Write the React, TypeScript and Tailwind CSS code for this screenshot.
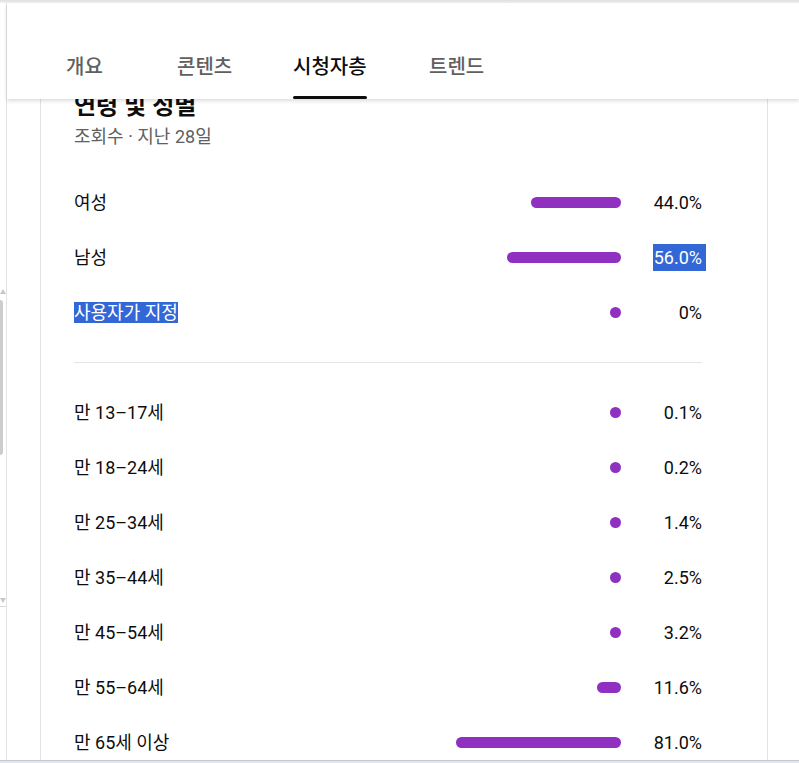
import React from 'react';

interface Row {
  label: string;
  pct: number;
  text: string;
  selLabel?: boolean;
  selValue?: boolean;
}

const genderRows: Row[] = [
  { label: '여성', pct: 44.0, text: '44.0%' },
  { label: '남성', pct: 56.0, text: '56.0%', selValue: true },
  { label: '사용자가 지정', pct: 0, text: '0%', selLabel: true },
];

const ageRows: Row[] = [
  { label: '만 13–17세', pct: 0.1, text: '0.1%' },
  { label: '만 18–24세', pct: 0.2, text: '0.2%' },
  { label: '만 25–34세', pct: 1.4, text: '1.4%' },
  { label: '만 35–44세', pct: 2.5, text: '2.5%' },
  { label: '만 45–54세', pct: 3.2, text: '3.2%' },
  { label: '만 55–64세', pct: 11.6, text: '11.6%' },
  { label: '만 65세 이상', pct: 81.0, text: '81.0%' },
];

const tabs = [
  { name: '개요', w: 'w-[111px]' },
  { name: '콘텐츠', w: 'w-[116px]' },
  { name: '시청자층', w: 'w-[136px]' },
  { name: '트렌드', w: 'w-[100px]' },
];

const StatRow: React.FC<{ row: Row }> = ({ row }) => {
  // bar width scales ~2.04px per percent, never smaller than a dot
  const width = Math.max(11, row.pct * 2.04);
  return (
    <div className="flex items-center h-[55px]">
      <div className="flex-1 text-[18px] leading-[28px] text-[#0d0d0d]">
        {row.selLabel ? (
          <span className="bg-[#3367d6] text-white">{row.label}</span>
        ) : (
          row.label
        )}
      </div>
      <div className="flex justify-end w-[220px]">
        <div className="h-[11px] rounded-full bg-[#9030c0]" style={{ width }} />
      </div>
      <div className="w-[81px] text-right text-[18px] leading-[27px] text-[#0d0d0d]">
        {row.selValue ? (
          <span className="bg-[#3367d6] text-white pl-[1px] pr-[4px] mr-[-4px] inline-block">{row.text}</span>
        ) : (
          row.text
        )}
      </div>
    </div>
  );
};

export default function App() {
  return (
    <div
      className="relative w-[799px] h-[763px] overflow-hidden bg-white"
      style={{ fontFamily: 'Roboto, "Noto Sans CJK KR", sans-serif' }}
    >
      {/* page body */}
      <div className="flex h-full">
        {/* left edge with a sliver of scrollbar */}
        <div className="relative w-[6px] shrink-0">
          <div className="absolute left-0 top-[289px] w-0 h-0 border-l-[3px] border-r-[3px] border-b-[5px] border-l-transparent border-r-transparent border-b-[#c8c8c8]" />
          <div className="absolute left-0 top-[300px] w-[3px] h-[155px] rounded-r-sm bg-[#cdcdcd]" />
          <div className="absolute left-0 top-[598px] w-0 h-0 border-l-[3px] border-r-[3px] border-t-[5px] border-l-transparent border-r-transparent border-t-[#c8c8c8]" />
          <div className="absolute left-0 top-[606px] w-[6px] h-px bg-[#d8d8d8]" />
        </div>
        <div className="flex-1 border-l border-[#e3e3e3] pl-[33px]">
          <div className="w-[728px] h-full border-l border-r border-[#e3e3e3] pl-[33px] pt-[90px]">
            <div className="w-[628px]">
              <h2 className="text-[24px] leading-[32px] font-bold text-[#0d0d0d]">연령 및 성별</h2>
              <p className="mt-[3px] text-[18px] leading-[24px] text-[#606060]">조회수 · 지난 28일</p>

              <div className="mt-[26px]">
                {genderRows.map((r) => (
                  <StatRow key={r.label} row={r} />
                ))}
              </div>

              <div className="my-[22px] h-px bg-[#e5e5e5]" />

              <div>
                {ageRows.map((r) => (
                  <StatRow key={r.label} row={r} />
                ))}
              </div>
            </div>
          </div>
        </div>
      </div>

      {/* browser top edge */}
      <div className="absolute top-0 left-0 right-0 h-[3px] bg-gradient-to-b from-[#dedede] to-[#f3f3f3]" />

      {/* sticky tab header */}
      <div className="absolute top-[3px] left-[7px] right-0 h-[96px] bg-white shadow-[0_2px_4px_rgba(0,0,0,0.14)] flex pl-[59px]">
        {tabs.map((t) => {
          const active = t.name === '시청자층';
          return (
            <div key={t.name} className={`flex flex-col items-start ${t.w}`}>
              <div className="inline-flex flex-col h-full pt-[52px]">
                <span
                  className={`text-[20px] leading-[24px] font-medium ${active ? 'text-[#0d0d0d]' : 'text-[#606060]'}`}
                >
                  {t.name}
                </span>
                {active && <div className="mt-auto h-[3px] rounded-full bg-[#0d0d0d]" />}
              </div>
            </div>
          );
        })}
      </div>

      {/* taskbar edge */}
      <div className="absolute bottom-0 left-0 right-0 h-[3px] border-t border-[#c4c9ce] bg-[#dbe8f3]" />
    </div>
  );
}
